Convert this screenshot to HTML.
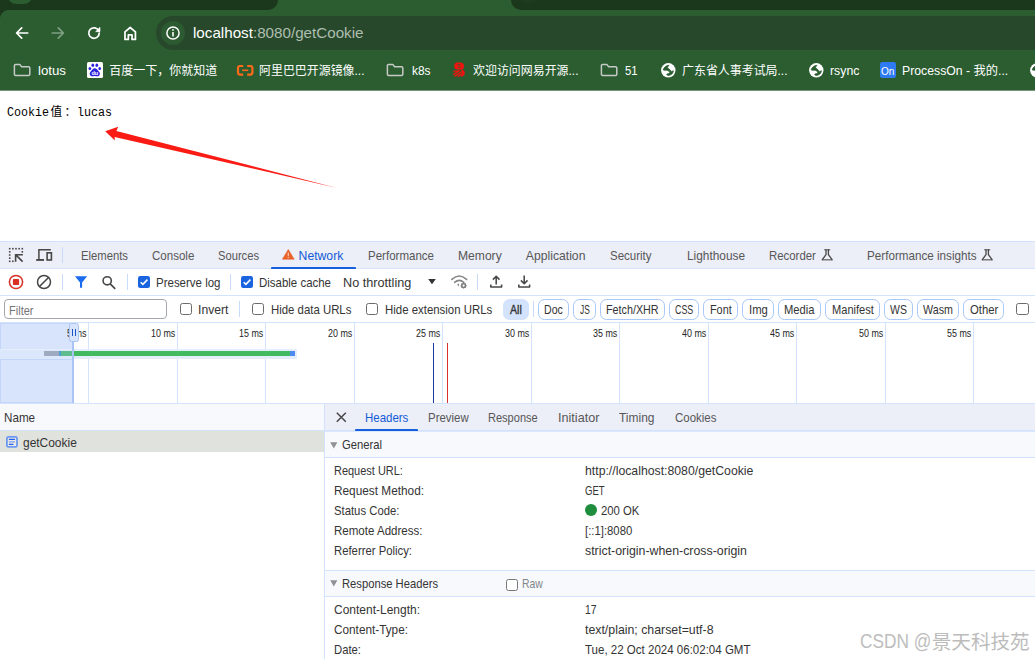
<!DOCTYPE html>
<html lang="zh-CN"><head><meta charset="utf-8"><title>localhost:8080/getCookie</title>
<style>
html,body{margin:0;padding:0;background:#fff;overflow:hidden}
body{width:1035px;height:659px;overflow:hidden;position:relative;font-family:'Liberation Sans','Noto Sans CJK SC',sans-serif;-webkit-font-smoothing:antialiased}
.t{position:absolute;white-space:pre;line-height:20px;z-index:5;transform-origin:0 50%}
.t b.h{font-weight:normal;color:#fff}
.t .wmc{display:inline-block;font-size:19.6px;color:#bcbcbc;transform:scaleX(1.1571);transform-origin:0 50%;position:relative;top:1px;margin-left:0.9px}
.t .cj{position:relative;top:0.1px;letter-spacing:2.4px;margin:0 -1.6px 0 1.6px}
.a{position:absolute;display:block}
svg.a{overflow:visible}
.vd{position:absolute;width:1px;background:#c9dbf8}
.hl{position:absolute;left:0;width:1035px;height:1px;background:#d3e3fd}
.cb{position:absolute;box-sizing:border-box;width:12.6px;height:12.6px;border:1.3px solid #6b6b6b;border-radius:2.5px;background:#fff}
.cbx{position:absolute;box-sizing:border-box;width:13px;height:13px;border-radius:2.5px;background:#0b57d0}
.chip{position:absolute;box-sizing:border-box;top:299px;height:21px;border:1px solid #a8c7fa;border-radius:6.5px}
.gl{position:absolute;top:323px;width:1px;height:80px;background:#d3e3fd}
</style></head>
<body>

<div class="a" style="left:0;top:0;width:1035px;height:90px;background:#2b5d31"></div>
<div class="a" style="left:0;top:90px;width:1035px;height:1px;background:#769779"></div>
<div class="a" style="left:-20px;top:-10px;width:297.5px;height:19.6px;background:#1b371c;border-radius:0 0 10px 0"></div>
<div class="a" style="left:0;top:9.6px;width:9px;height:9px;background:radial-gradient(circle at 100% 100%,#2b5d31 8.6px,#1b371c 9.4px)"></div>
<div class="a" style="left:7.8px;top:-12px;width:24.6px;height:16px;border-radius:8px;background:#2b5d31"></div>
<div class="a" style="left:510.5px;top:-10px;width:600px;height:19.6px;background:#1b371c;border-radius:0 0 0 10px"></div>
<div class="a" style="left:519px;top:-16px;width:21px;height:20px;border-radius:10px;background:#1e3b1f"></div>
<div class="a" style="left:156px;top:16px;width:920px;height:34px;border-radius:17px;background:#28482b"></div>
<div class="a" style="left:160.6px;top:21px;width:24px;height:24px;border-radius:12px;background:#2c5a31"></div>
<svg class="a" style="left:13.1px;top:23.8px" width="18" height="18" viewBox="0 0 24 24"><path d="M19.6 12H5.4M11.6 5.2 4.8 12l6.8 6.8" fill="none" stroke="#fff" stroke-width="2.3" stroke-linecap="round" stroke-linejoin="round"/></svg>
<svg class="a" style="left:49px;top:23.8px" width="18" height="18" viewBox="0 0 24 24"><path d="M4.4 12H18.6M12.4 5.2 19.2 12l-6.8 6.8" fill="none" stroke="#7f9f82" stroke-width="2.3" stroke-linecap="round" stroke-linejoin="round"/></svg>
<svg class="a" style="left:85.1px;top:23.8px" width="18" height="18" viewBox="0 0 24 24"><path d="M18.4 9.2A7 7 0 1 0 19 12" fill="none" stroke="#fff" stroke-width="2.3" stroke-linecap="round"/><path d="M20 4.4v5.8h-5.8z" fill="#fff" stroke="#fff" stroke-width="0.8" stroke-linejoin="round"/></svg>
<svg class="a" style="left:120.9px;top:23.6px" width="18.4" height="18.4" viewBox="0 0 24 24"><path d="M5.2 20.2V10.2L12 4.6l6.8 5.6v10H14.4v-6H9.6v6z" fill="none" stroke="#fff" stroke-width="2.3" stroke-linejoin="round"/></svg>
<svg class="a" style="left:164.6px;top:25px" width="16" height="16" viewBox="0 0 16 16"><circle cx="8" cy="8" r="6.1" fill="none" stroke="#fff" stroke-width="1.5"/><circle cx="8" cy="4.9" r="0.95" fill="#fff"/><rect x="7.2" y="6.9" width="1.6" height="4.6" rx="0.3" fill="#fff"/></svg>
<svg class="a" style="left:13.0px;top:63.2px" width="18" height="14" viewBox="0 0 18 14"><path d="M2.6 1.4H6.8L8.6 3.7H15.6Q16.8 3.7 16.8 4.9V11.2Q16.8 12.4 15.6 12.4H2.6Q1.4 12.4 1.4 11.2V2.6Q1.4 1.4 2.6 1.4Z" fill="none" stroke="#c6c9c6" stroke-width="1.5" stroke-linejoin="round"/></svg>
<svg class="a" style="left:386.4px;top:63.2px" width="18" height="14" viewBox="0 0 18 14"><path d="M2.6 1.4H6.8L8.6 3.7H15.6Q16.8 3.7 16.8 4.9V11.2Q16.8 12.4 15.6 12.4H2.6Q1.4 12.4 1.4 11.2V2.6Q1.4 1.4 2.6 1.4Z" fill="none" stroke="#c6c9c6" stroke-width="1.5" stroke-linejoin="round"/></svg>
<svg class="a" style="left:600.2px;top:63.2px" width="18" height="14" viewBox="0 0 18 14"><path d="M2.6 1.4H6.8L8.6 3.7H15.6Q16.8 3.7 16.8 4.9V11.2Q16.8 12.4 15.6 12.4H2.6Q1.4 12.4 1.4 11.2V2.6Q1.4 1.4 2.6 1.4Z" fill="none" stroke="#c6c9c6" stroke-width="1.5" stroke-linejoin="round"/></svg>
<svg class="a" style="left:87px;top:62px" width="16" height="16" viewBox="0 0 16 16"><rect width="16" height="16" rx="1.6" fill="#fff"/><g fill="#2a22dd"><ellipse cx="5.8" cy="3.2" rx="1.35" ry="1.7"/><ellipse cx="9.8" cy="3.2" rx="1.35" ry="1.7"/><ellipse cx="2.9" cy="6.5" rx="1.35" ry="1.6"/><ellipse cx="12.7" cy="6.5" rx="1.35" ry="1.6"/><path d="M7.8 6.2C9.6 6.2 10.3 8 11.7 9.2 13.4 10.6 13.2 12.6 12 13.7 10.6 14.8 9.2 13.9 7.8 13.9 6.4 13.9 5 14.8 3.6 13.7 2.4 12.6 2.3 10.6 3.9 9.2 5.3 8 6 6.2 7.8 6.2Z"/></g><text x="7.8" y="12.9" font-size="5.6" font-weight="bold" text-anchor="middle" fill="#fff" font-family="Liberation Sans, sans-serif">du</text></svg>
<svg class="a" style="left:236.8px;top:64.6px" width="16.4" height="10.6" viewBox="0 0 16.4 10.6"><g fill="none" stroke="#ff6a1a" stroke-width="2.2" stroke-linejoin="round" stroke-linecap="butt"><path d="M6.2 1H3Q1 1 1 3V7.6Q1 9.6 3 9.6H6.2"/><path d="M10.2 1H13.4Q15.4 1 15.4 3V7.6Q15.4 9.6 13.4 9.6H10.2"/></g><rect x="5.2" y="4.5" width="6" height="1.6" fill="#ff6a1a"/></svg>
<svg class="a" style="left:452.6px;top:62.4px" width="13" height="15" viewBox="0 0 13 15"><g fill="#f5130f"><path d="M3.2 0.4H8.6L10.8 2.2V6.2L9.2 7.6H3.6L1.4 6.2V2.2Z"/><path d="M8.6 7.2 11.6 9.2 11.8 12.2 9.6 14.6H7.4L9.6 11.6 8.2 8.8Z"/></g><g stroke="#f5130f" stroke-width="1.3" fill="none"><path d="M0.4 9.1H5.2"/><path d="M0.2 12.6 6.6 8.4"/><path d="M1.6 14.4 8.8 9.6"/><path d="M4.8 14.6 9.8 11.2"/></g><g stroke="#2b5d31" stroke-width="0.9"><path d="M4.6 2.7H7.6M4.6 5.2H7.6"/></g></svg>
<svg class="a" style="left:660.7px;top:62.7px" width="14.6" height="14.6" viewBox="0 0 14.6 14.6"><circle cx="7.3" cy="7.3" r="7.2" fill="#fff"/><path d="M8.1 2.3C6.8 2.3 5.4 2.8 4.4 3.6 3.3 4.5 2.5 5.6 2.2 6.9 3.2 7.4 4.2 7.2 5.2 7.3 6.2 7.4 7.4 7.6 8.2 8.6 9 9.6 8.8 10.4 7.8 10.6 6.8 10.8 6 10.8 5.7 11.4 5.5 11.9 6 12.3 7.2 12.4 9 12.5 10.6 11.6 11.6 10.2 12.2 9.3 12.5 8.4 12.3 7.6 11.8 8.2 11.2 8.6 10.6 8.4 9.8 8.2 9.4 7.4 8.8 6.6 8.2 5.8 7 5.4 6.7 4.8 6.4 4 7.2 3 8.1 2.3Z" fill="#2b5d31" stroke="#2b5d31" stroke-width="0.7" stroke-linejoin="round"/></svg>
<svg class="a" style="left:808.6px;top:62.7px" width="14.6" height="14.6" viewBox="0 0 14.6 14.6"><circle cx="7.3" cy="7.3" r="7.2" fill="#fff"/><path d="M8.1 2.3C6.8 2.3 5.4 2.8 4.4 3.6 3.3 4.5 2.5 5.6 2.2 6.9 3.2 7.4 4.2 7.2 5.2 7.3 6.2 7.4 7.4 7.6 8.2 8.6 9 9.6 8.8 10.4 7.8 10.6 6.8 10.8 6 10.8 5.7 11.4 5.5 11.9 6 12.3 7.2 12.4 9 12.5 10.6 11.6 11.6 10.2 12.2 9.3 12.5 8.4 12.3 7.6 11.8 8.2 11.2 8.6 10.6 8.4 9.8 8.2 9.4 7.4 8.8 6.6 8.2 5.8 7 5.4 6.7 4.8 6.4 4 7.2 3 8.1 2.3Z" fill="#2b5d31" stroke="#2b5d31" stroke-width="0.7" stroke-linejoin="round"/></svg>
<svg class="a" style="left:1030.2px;top:62.7px" width="14.6" height="14.6" viewBox="0 0 14.6 14.6"><circle cx="7.3" cy="7.3" r="7.2" fill="#fff"/><path d="M8.1 2.3C6.8 2.3 5.4 2.8 4.4 3.6 3.3 4.5 2.5 5.6 2.2 6.9 3.2 7.4 4.2 7.2 5.2 7.3 6.2 7.4 7.4 7.6 8.2 8.6 9 9.6 8.8 10.4 7.8 10.6 6.8 10.8 6 10.8 5.7 11.4 5.5 11.9 6 12.3 7.2 12.4 9 12.5 10.6 11.6 11.6 10.2 12.2 9.3 12.5 8.4 12.3 7.6 11.8 8.2 11.2 8.6 10.6 8.4 9.8 8.2 9.4 7.4 8.8 6.6 8.2 5.8 7 5.4 6.7 4.8 6.4 4 7.2 3 8.1 2.3Z" fill="#2b5d31" stroke="#2b5d31" stroke-width="0.7" stroke-linejoin="round"/></svg>
<div class="a" style="left:880px;top:61.9px;width:16px;height:16px;border-radius:2.2px;background:#2f7bf3"></div>
<svg class="a" style="left:0;top:90px" width="400" height="150" viewBox="0 90 400 150"><path d="M105.2 131.2 118.2 126.8 116.4 130.9 337 187.9 114.6 136.9 114.9 140.6Z" fill="#fa1c14"/></svg>
<div class="hl" style="top:241px"></div>
<div class="a" style="left:0;top:242px;width:1035px;height:26px;background:#eceef8"></div>
<div class="hl" style="top:268px"></div>
<div class="hl" style="top:295px"></div>
<div class="hl" style="top:322px"></div>
<svg class="a" style="left:0;top:242px" width="70" height="26" viewBox="0 242 70 26"><g fill="#474747"><rect x="8.90" y="247.90" width="1.6" height="1.6"/><rect x="12.05" y="247.90" width="1.6" height="1.6"/><rect x="15.20" y="247.90" width="1.6" height="1.6"/><rect x="18.35" y="247.90" width="1.6" height="1.6"/><rect x="21.50" y="247.90" width="1.6" height="1.6"/><rect x="8.90" y="251.05" width="1.6" height="1.6"/><rect x="8.90" y="254.20" width="1.6" height="1.6"/><rect x="8.90" y="257.35" width="1.6" height="1.6"/><rect x="8.90" y="260.50" width="1.6" height="1.6"/><rect x="12.05" y="260.50" width="1.6" height="1.6"/><rect x="21.50" y="251.05" width="1.6" height="1.6"/></g><path d="M22.9 254.7H15.6V261.8M15.8 254.9 22.6 261.6" fill="none" stroke="#474747" stroke-width="1.6"/><path d="M50.8 249.8H38.9V259.2" fill="none" stroke="#474747" stroke-width="1.5"/><rect x="36.2" y="259" width="7.8" height="1.9" fill="#474747"/><rect x="47.1" y="252.8" width="4.3" height="7.2" fill="none" stroke="#474747" stroke-width="1.6"/></svg>
<div class="vd" style="left:62px;top:247px;height:16px"></div>
<svg class="a" style="left:282.4px;top:248.8px" width="12.6" height="10.6" viewBox="0 0 12.6 10.6"><path d="M6.3 0.5 12.2 10.2H0.4Z" fill="#e8622c" stroke="#e8622c" stroke-width="0.6" stroke-linejoin="round"/><rect x="5.65" y="3.6" width="1.3" height="3.4" fill="#f3bfa3"/><rect x="5.65" y="7.8" width="1.3" height="1.3" fill="#f3bfa3"/></svg>
<div class="a" style="left:271.3px;top:266.6px;width:84.7px;height:2.2px;background:#1660de;border-radius:1px 1px 0 0"></div>
<svg class="a" style="left:820.9px;top:249.4px" width="12.4" height="12" viewBox="0 0 12.4 12"><path d="M3.2 0.75H9.2M1.3 10.75H11.1" fill="none" stroke="#7d7d7d" stroke-width="1.3"/><path d="M5 0.8V5.7L1.3 10.7M11.1 10.7 7.4 5.7V0.8" fill="none" stroke="#474747" stroke-width="1.3" stroke-linejoin="round" stroke-linecap="round"/></svg>
<svg class="a" style="left:981.4px;top:249.4px" width="12.4" height="12" viewBox="0 0 12.4 12"><path d="M3.2 0.75H9.2M1.3 10.75H11.1" fill="none" stroke="#7d7d7d" stroke-width="1.3"/><path d="M5 0.8V5.7L1.3 10.7M11.1 10.7 7.4 5.7V0.8" fill="none" stroke="#474747" stroke-width="1.3" stroke-linejoin="round" stroke-linecap="round"/></svg>
<svg class="a" style="left:0;top:269px" width="540" height="26" viewBox="0 269 540 26"><circle cx="16" cy="282" r="6.6" fill="none" stroke="#d93025" stroke-width="1.5"/><rect x="12.9" y="278.9" width="6.2" height="6.2" rx="0.8" fill="#d93025"/><circle cx="44" cy="282" r="6.5" fill="none" stroke="#474747" stroke-width="1.5"/><path d="M39.5 286.6 48.5 277.4" stroke="#474747" stroke-width="1.5"/><path d="M75 276.3H87.1L82.1 282.6V287.8H80V282.6Z" fill="#1a6bf0"/><circle cx="107.2" cy="280.8" r="4.1" fill="none" stroke="#474747" stroke-width="1.6"/><path d="M110.2 283.9 115.2 288.9" stroke="#474747" stroke-width="1.7"/><path d="M428.2 279H435.8L432 284.2Z" fill="#333"/><g fill="none" stroke="#858585" stroke-width="1.55" stroke-linecap="round"><path d="M451.8 279.4Q459.2 272.6 466.6 279.4"/><path d="M454.6 282.4Q459.2 278.4 463.8 282.4"/></g><path d="M457 284.6 459 286.6 459 283.4Z" fill="#8a8a8a"/><circle cx="463.6" cy="285.6" r="2" fill="none" stroke="#808080" stroke-width="1.4"/><path d="M463.6 282.6V288.6M460.6 285.6H466.6M461.5 283.5 465.7 287.7M465.7 283.5 461.5 287.7" stroke="#808080" stroke-width="1.1"/><circle cx="463.6" cy="285.6" r="1.1" fill="#fff"/><g fill="none" stroke="#474747" stroke-width="1.55" stroke-linejoin="round"><path d="M490.8 284.4V287H501.6V284.4"/><path d="M496.2 284.6V276.4M492.9 279.6 496.2 276.3 499.5 279.6"/><path d="M518.8 284.4V287H529.6V284.4"/><path d="M524.2 275.6V283.6M520.9 280.4 524.2 283.7 527.5 280.4"/></g></svg>
<div class="vd" style="left:62px;top:274.4px;height:15.6px"></div>
<div class="vd" style="left:127px;top:274.4px;height:15.6px"></div>
<div class="vd" style="left:230px;top:274.4px;height:15.6px"></div>
<div class="vd" style="left:477px;top:274.4px;height:15.6px"></div>
<svg class="a" style="left:138.1px;top:276px" width="12" height="12" viewBox="0 0 13 13"><rect width="13" height="13" rx="2.4" fill="#1a64e0"/><path d="M2.9 6.7 5.3 9.1 10.2 3.9" fill="none" stroke="#fff" stroke-width="1.7"/></svg>
<svg class="a" style="left:241.4px;top:276px" width="12" height="12" viewBox="0 0 13 13"><rect width="13" height="13" rx="2.4" fill="#1a64e0"/><path d="M2.9 6.7 5.3 9.1 10.2 3.9" fill="none" stroke="#fff" stroke-width="1.7"/></svg>
<div class="a" style="left:4.2px;top:299px;width:162.6px;height:19.6px;box-sizing:border-box;border:1px solid #a4a8ad;border-radius:4px;background:#fff"></div>
<div class="cb" style="left:179.6px;top:302.8px"></div>
<div class="cb" style="left:251.8px;top:302.8px"></div>
<div class="cb" style="left:365.6px;top:302.8px"></div>
<div class="cb" style="left:1016px;top:302.8px"></div>
<div class="vd" style="left:239.4px;top:301px;height:16px"></div>
<div class="vd" style="left:533.4px;top:301px;height:16px"></div>
<div class="chip" style="left:503px;width:26px;border-color:#d3e3fd;background:#d3e3fd"></div>
<div class="chip" style="left:538px;width:31px"></div>
<div class="chip" style="left:573px;width:23px"></div>
<div class="chip" style="left:600px;width:65px"></div>
<div class="chip" style="left:669px;width:30px"></div>
<div class="chip" style="left:703px;width:35px"></div>
<div class="chip" style="left:742px;width:32px"></div>
<div class="chip" style="left:778px;width:43px"></div>
<div class="chip" style="left:825px;width:55px"></div>
<div class="chip" style="left:884px;width:29px"></div>
<div class="chip" style="left:917px;width:42px"></div>
<div class="chip" style="left:963px;width:41px"></div>
<div class="gl" style="left:88px"></div>
<div class="gl" style="left:177px"></div>
<div class="gl" style="left:265px"></div>
<div class="gl" style="left:354px"></div>
<div class="gl" style="left:442px"></div>
<div class="gl" style="left:531px"></div>
<div class="gl" style="left:619px"></div>
<div class="gl" style="left:708px"></div>
<div class="gl" style="left:796px"></div>
<div class="gl" style="left:885px"></div>
<div class="gl" style="left:973px"></div>
<div class="a" style="left:0;top:323px;width:72.4px;height:80px;background:#d7e4fb"></div>
<div class="a" style="left:0;top:323px;width:72.4px;height:27px;box-sizing:border-box;border:1px solid #c3d6f9;border-right:0"></div>
<div class="a" style="left:0;top:358.6px;width:72.4px;height:44.4px;box-sizing:border-box;border:1px solid #c3d6f9;border-right:0"></div>
<div class="a" style="left:0;top:349.4px;width:297.4px;height:9.4px;background:#e4edfc"></div>
<div class="a" style="left:0;top:350px;width:72.4px;height:8.6px;background:#dbe7fb"></div>
<div class="a" style="left:44px;top:351.2px;width:15px;height:5.1px;background:#9eaabf"></div>
<div class="a" style="left:59px;top:351.2px;width:2px;height:5.1px;background:#4b9fd6"></div>
<div class="a" style="left:61px;top:351.2px;width:11.6px;height:5.1px;background:#5fbd8d"></div>
<div class="a" style="left:72.4px;top:351.2px;width:217.4px;height:5.1px;background:#42ba5f"></div>
<div class="a" style="left:289.8px;top:351.2px;width:5.4px;height:5.1px;background:#4d8af0"></div>
<div class="a" style="left:72.2px;top:323px;width:1.9px;height:80px;background:#a9c4f5"></div>
<div class="a" style="left:69.4px;top:323.4px;width:9.4px;height:18.2px;box-sizing:border-box;border:1px solid #a9c4f5;border-radius:2.5px;background:#d7e4fb;z-index:6"></div>
<div class="a" style="left:72px;top:329px;width:1.1px;height:7.2px;background:#1a56c8;z-index:7"></div>
<div class="a" style="left:75px;top:329px;width:1.1px;height:7.2px;background:#1a56c8;z-index:7"></div>
<div class="a" style="left:433px;top:343px;width:1px;height:60px;background:#1a3a9c"></div>
<div class="a" style="left:446.8px;top:343px;width:1px;height:60px;background:#d6312b"></div>
<div class="hl" style="top:403px"></div>
<div class="a" style="left:0;top:404px;width:324px;height:26px;background:#f8f9fd"></div>
<div class="a" style="left:325px;top:404px;width:710px;height:26px;background:#eceef8"></div>
<div class="hl" style="top:430px"></div>
<div class="a" style="left:0;top:431px;width:324px;height:20.6px;background:#e0e2de"></div>
<div class="a" style="left:324px;top:404px;width:1px;height:255px;background:#d3e3fd"></div>
<svg class="a" style="left:6.1px;top:436.1px" width="11.9" height="11.8" viewBox="0 0 11.9 11.8"><rect x="0.9" y="0.9" width="10.1" height="10" rx="1.5" fill="#ebe9e6" stroke="#6d99f1" stroke-width="1.8"/><path d="M2.9 3.4H9M2.9 8.4H7.5" stroke="#1f62ee" stroke-width="1.1"/><path d="M2.9 5.9H9" stroke="#7aa2f3" stroke-width="1.3"/></svg>
<svg class="a" style="left:336.4px;top:411.9px" width="10.6" height="10.6" viewBox="0 0 10.6 10.6"><path d="M0.8 0.8 9.8 9.8M9.8 0.8 0.8 9.8" stroke="#474747" stroke-width="1.5"/></svg>
<div class="a" style="left:355.2px;top:428.8px;width:63px;height:2.2px;background:#1660de;border-radius:1px 1px 0 0;z-index:3"></div>
<div class="a" style="left:325px;top:431px;width:710px;height:1px;background:#dbe7fc"></div>
<div class="a" style="left:325px;top:432px;width:710px;height:25px;background:#f8f9fd"></div>
<div class="a" style="left:325px;top:457px;width:710px;height:1px;background:#d3e3fd"></div>
<div class="a" style="left:325px;top:570px;width:710px;height:1px;background:#d3e3fd"></div>
<div class="a" style="left:325px;top:571px;width:710px;height:25px;background:#f8f9fd"></div>
<div class="a" style="left:325px;top:596px;width:710px;height:1px;background:#d3e3fd"></div>
<svg class="a" style="left:330.1px;top:441.8px" width="7.6" height="6.8" viewBox="0 0 7.4 6.4" preserveAspectRatio="none"><path d="M0.2 0.3H7.2L3.7 6.2Z" fill="#8f9196"/></svg>
<svg class="a" style="left:330.1px;top:580.4px" width="7.6" height="6.8" viewBox="0 0 7.4 6.4" preserveAspectRatio="none"><path d="M0.2 0.3H7.2L3.7 6.2Z" fill="#8f9196"/></svg>
<div class="a" style="left:585px;top:504.2px;width:12px;height:12px;border-radius:6px;background:#1e8e3e"></div>
<div class="cb" style="left:506px;top:578.8px;width:12px;height:12px;border-color:#777"></div>
<span class="t" style="left:193.30px;top:23.08px;font-size:14.2px;color:#adbeb0;transform:scaleX(1.0700);"><b class="h">localhost</b>:8080/getCookie</span>
<span class="t" style="left:38.20px;top:60.60px;font-size:13px;color:#fff;transform:scaleX(1.0193);">lotus</span>
<span class="t" style="left:109.20px;top:60.94px;font-size:12px;color:#fff;">百度一下，你就知道</span>
<span class="t" style="left:259.00px;top:60.94px;font-size:12px;color:#fff;transform:scaleX(0.9951);">阿里巴巴开源镜像...</span>
<span class="t" style="left:411.50px;top:60.60px;font-size:13px;color:#fff;transform:scaleX(0.9143);">k8s</span>
<span class="t" style="left:472.70px;top:60.94px;font-size:12px;color:#fff;transform:scaleX(0.9951);">欢迎访问网易开源...</span>
<span class="t" style="left:625.40px;top:60.60px;font-size:13px;color:#fff;transform:scaleX(0.8708);">51</span>
<span class="t" style="left:682.20px;top:60.94px;font-size:12px;color:#fff;transform:scaleX(0.9951);">广东省人事考试局...</span>
<span class="t" style="left:830.40px;top:60.60px;font-size:13px;color:#fff;transform:scaleX(0.9465);">rsync</span>
<span class="t" style="left:902.30px;top:60.77px;font-size:12.5px;color:#fff;transform:scaleX(0.9801);">ProcessOn - 我的...</span>
<span class="t" style="left:881.30px;top:60.59px;font-size:11px;color:#fff;transform:scaleX(0.9123);">On</span>
<span class="t" style="left:7.00px;top:103.24px;font-size:12px;color:#000;font-family:'Liberation Mono','Noto Sans CJK SC',monospace;transform:scaleX(0.9718);">Cookie<span class="cj">值：</span>lucas</span>
<span class="t" style="left:81.00px;top:245.77px;font-size:12.2px;color:#575757;transform:scaleX(0.9250);">Elements</span>
<span class="t" style="left:152.00px;top:245.77px;font-size:12.2px;color:#575757;transform:scaleX(0.9459);">Console</span>
<span class="t" style="left:217.50px;top:245.77px;font-size:12.2px;color:#575757;transform:scaleX(0.9168);">Sources</span>
<span class="t" style="left:298.60px;top:245.77px;font-size:12.2px;color:#125cd6;">Network</span>
<span class="t" style="left:368.00px;top:245.77px;font-size:12.2px;color:#575757;transform:scaleX(0.9458);">Performance</span>
<span class="t" style="left:458.00px;top:245.77px;font-size:12.2px;color:#575757;transform:scaleX(0.9928);">Memory</span>
<span class="t" style="left:525.80px;top:245.77px;font-size:12.2px;color:#575757;">Application</span>
<span class="t" style="left:609.70px;top:245.77px;font-size:12.2px;color:#575757;transform:scaleX(0.9425);">Security</span>
<span class="t" style="left:687.00px;top:245.77px;font-size:12.2px;color:#575757;transform:scaleX(0.9725);">Lighthouse</span>
<span class="t" style="left:769.00px;top:245.77px;font-size:12.2px;color:#575757;transform:scaleX(0.9357);">Recorder</span>
<span class="t" style="left:867.30px;top:245.77px;font-size:12.2px;color:#575757;transform:scaleX(0.9573);">Performance insights</span>
<span class="t" style="left:156.00px;top:272.77px;font-size:12.2px;color:#343434;transform:scaleX(0.9427);">Preserve log</span>
<span class="t" style="left:259.00px;top:272.77px;font-size:12.2px;color:#343434;transform:scaleX(0.9404);">Disable cache</span>
<span class="t" style="left:343.00px;top:272.77px;font-size:12.2px;color:#343434;transform:scaleX(1.0393);">No throttling</span>
<span class="t" style="left:9.00px;top:300.77px;font-size:12.2px;color:#757575;transform:scaleX(0.9043);">Filter</span>
<span class="t" style="left:198.00px;top:299.77px;font-size:12.2px;color:#343434;">Invert</span>
<span class="t" style="left:270.80px;top:299.77px;font-size:12.2px;color:#343434;transform:scaleX(0.9344);">Hide data URLs</span>
<span class="t" style="left:384.70px;top:299.77px;font-size:12.2px;color:#343434;transform:scaleX(0.9372);">Hide extension URLs</span>
<span class="t" style="left:510.00px;top:299.77px;font-size:12.2px;color:#343434;transform:scaleX(0.8710);-webkit-text-stroke:0.35px #343434;">All</span>
<span class="t" style="left:544.00px;top:299.77px;font-size:12.2px;color:#343434;transform:scaleX(0.8669);">Doc</span>
<span class="t" style="left:579.60px;top:299.77px;font-size:12.2px;color:#343434;transform:scaleX(0.6885);">JS</span>
<span class="t" style="left:605.90px;top:299.77px;font-size:12.2px;color:#343434;transform:scaleX(0.8824);">Fetch/XHR</span>
<span class="t" style="left:674.90px;top:299.77px;font-size:12.2px;color:#343434;transform:scaleX(0.7302);">CSS</span>
<span class="t" style="left:710.00px;top:299.77px;font-size:12.2px;color:#343434;transform:scaleX(0.8897);">Font</span>
<span class="t" style="left:748.70px;top:299.77px;font-size:12.2px;color:#343434;transform:scaleX(0.9248);">Img</span>
<span class="t" style="left:784.10px;top:299.77px;font-size:12.2px;color:#343434;transform:scaleX(0.9186);">Media</span>
<span class="t" style="left:831.80px;top:299.77px;font-size:12.2px;color:#343434;transform:scaleX(0.9096);">Manifest</span>
<span class="t" style="left:890.20px;top:299.77px;font-size:12.2px;color:#343434;transform:scaleX(0.8605);">WS</span>
<span class="t" style="left:923.20px;top:299.77px;font-size:12.2px;color:#343434;transform:scaleX(0.8774);">Wasm</span>
<span class="t" style="left:969.60px;top:299.77px;font-size:12.2px;color:#343434;transform:scaleX(0.9283);">Other</span>
<span class="t" style="left:66.90px;top:323.39px;font-size:11px;color:#262626;transform:scaleX(0.8220);">5 ms</span>
<span class="t" style="left:150.70px;top:323.39px;font-size:11px;color:#262626;transform:scaleX(0.8108);">10 ms</span>
<span class="t" style="left:239.20px;top:323.39px;font-size:11px;color:#262626;transform:scaleX(0.8108);">15 ms</span>
<span class="t" style="left:327.70px;top:323.39px;font-size:11px;color:#262626;transform:scaleX(0.8108);">20 ms</span>
<span class="t" style="left:416.20px;top:323.39px;font-size:11px;color:#262626;transform:scaleX(0.8108);">25 ms</span>
<span class="t" style="left:504.70px;top:323.39px;font-size:11px;color:#262626;transform:scaleX(0.8108);">30 ms</span>
<span class="t" style="left:593.20px;top:323.39px;font-size:11px;color:#262626;transform:scaleX(0.8108);">35 ms</span>
<span class="t" style="left:681.70px;top:323.39px;font-size:11px;color:#262626;transform:scaleX(0.8108);">40 ms</span>
<span class="t" style="left:770.20px;top:323.39px;font-size:11px;color:#262626;transform:scaleX(0.8108);">45 ms</span>
<span class="t" style="left:858.70px;top:323.39px;font-size:11px;color:#262626;transform:scaleX(0.8108);">50 ms</span>
<span class="t" style="left:947.20px;top:323.39px;font-size:11px;color:#262626;transform:scaleX(0.8108);">55 ms</span>
<span class="t" style="left:4.30px;top:407.77px;font-size:12.2px;color:#343434;transform:scaleX(0.9565);">Name</span>
<span class="t" style="left:23.20px;top:432.77px;font-size:12.2px;color:#343434;transform:scaleX(0.9801);">getCookie</span>
<span class="t" style="left:364.70px;top:407.77px;font-size:12.2px;color:#125cd6;transform:scaleX(0.9397);">Headers</span>
<span class="t" style="left:427.60px;top:407.77px;font-size:12.2px;color:#575757;transform:scaleX(0.9387);">Preview</span>
<span class="t" style="left:487.90px;top:407.77px;font-size:12.2px;color:#575757;transform:scaleX(0.9054);">Response</span>
<span class="t" style="left:557.60px;top:407.77px;font-size:12.2px;color:#575757;transform:scaleX(1.0358);">Initiator</span>
<span class="t" style="left:619.00px;top:407.77px;font-size:12.2px;color:#575757;transform:scaleX(0.9827);">Timing</span>
<span class="t" style="left:674.50px;top:407.77px;font-size:12.2px;color:#575757;transform:scaleX(0.9425);">Cookies</span>
<span class="t" style="left:341.90px;top:434.77px;font-size:12.2px;color:#343434;transform:scaleX(0.9248);">General</span>
<span class="t" style="left:333.50px;top:461.27px;font-size:12.2px;color:#343434;transform:scaleX(0.9001);">Request URL:</span>
<span class="t" style="left:585.00px;top:461.27px;font-size:12.2px;color:#343434;transform:scaleX(1.0062);">http://localhost:8080/getCookie</span>
<span class="t" style="left:333.50px;top:481.27px;font-size:12.2px;color:#343434;transform:scaleX(0.9695);">Request Method:</span>
<span class="t" style="left:585.00px;top:481.27px;font-size:12.2px;color:#343434;transform:scaleX(0.7820);">GET</span>
<span class="t" style="left:333.50px;top:501.27px;font-size:12.2px;color:#343434;transform:scaleX(0.9281);">Status Code:</span>
<span class="t" style="left:333.50px;top:521.27px;font-size:12.2px;color:#343434;transform:scaleX(0.9467);">Remote Address:</span>
<span class="t" style="left:585.00px;top:521.27px;font-size:12.2px;color:#343434;transform:scaleX(0.9306);">[::1]:8080</span>
<span class="t" style="left:333.50px;top:541.27px;font-size:12.2px;color:#343434;transform:scaleX(0.9287);">Referrer Policy:</span>
<span class="t" style="left:585.00px;top:541.27px;font-size:12.2px;color:#343434;transform:scaleX(1.0135);">strict-origin-when-cross-origin</span>
<span class="t" style="left:601.40px;top:501.27px;font-size:12.2px;color:#343434;transform:scaleX(0.9288);">200 OK</span>
<span class="t" style="left:342.00px;top:574.27px;font-size:12.2px;color:#343434;transform:scaleX(0.9200);">Response Headers</span>
<span class="t" style="left:521.80px;top:574.27px;font-size:12.2px;color:#80868b;transform:scaleX(0.8528);">Raw</span>
<span class="t" style="left:333.50px;top:600.27px;font-size:12.2px;color:#343434;transform:scaleX(0.9837);">Content-Length:</span>
<span class="t" style="left:585.00px;top:600.27px;font-size:12.2px;color:#343434;transform:scaleX(0.8479);">17</span>
<span class="t" style="left:333.50px;top:620.07px;font-size:12.2px;color:#343434;transform:scaleX(0.9665);">Content-Type:</span>
<span class="t" style="left:585.00px;top:620.07px;font-size:12.2px;color:#343434;transform:scaleX(1.0116);">text/plain; charset=utf-8</span>
<span class="t" style="left:333.50px;top:639.87px;font-size:12.2px;color:#343434;transform:scaleX(0.9265);">Date:</span>
<span class="t" style="left:585.00px;top:639.87px;font-size:12.2px;color:#343434;transform:scaleX(0.9456);">Tue, 22 Oct 2024 06:02:04 GMT</span>
<span class="t" style="left:860.30px;top:630.67px;font-size:20px;color:#bdbdbd;transform:scaleX(0.8642);text-shadow:1px 1px 0 #fff,-1px -1px 0 #fff;">CSDN @<span class="wmc">景天科技苑</span></span>
</body></html>
